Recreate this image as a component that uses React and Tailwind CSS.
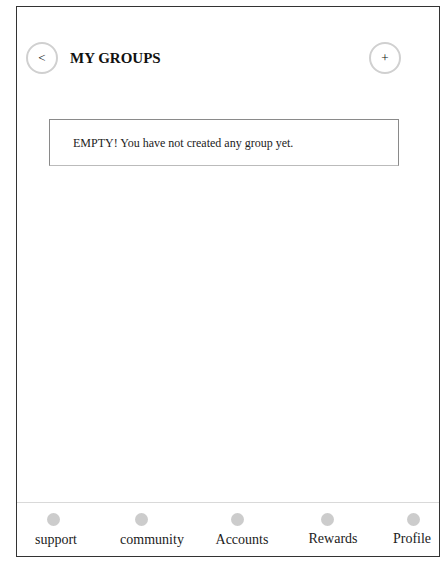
import React from "react";

const navItems = [
  { label: "support", w: "w-[78px]", dot: "ml-[-6px]", text: "mt-[6px]" },
  { label: "community", w: "w-[114px]", dot: "ml-[-22px]", text: "mt-[6px]" },
  { label: "Accounts", w: "w-[66px]", dot: "ml-[-10px]", text: "mt-[6px]" },
  { label: "Rewards", w: "w-[116px]", dot: "ml-[-12px]", text: "mt-[5px]" },
  { label: "Profile", w: "w-[42px]", dot: "ml-[2px]", text: "mt-[5px]" },
];

function CircleButton({ children }) {
  return (
    <div className="w-8 h-8 rounded-full border-2 border-[#d0d0d0] flex items-center justify-center text-[13px] text-[#111] shrink-0">
      {children}
    </div>
  );
}

export default function App() {
  return (
    <div className="w-[446px] h-[566px] bg-white pt-[6px] pl-4" style={{ fontFamily: '"Liberation Serif", "Times New Roman", serif' }}>
      <div className="w-[424px] h-[551px] border border-[#333] flex flex-col">
        {/* Header */}
        <div className="flex items-center pl-[9px] pr-[38px] pt-[35px]">
          <CircleButton>&lt;</CircleButton>
          <h1 className="ml-3 text-[15px] font-bold text-[#111] flex-1">MY GROUPS</h1>
          <CircleButton>+</CircleButton>
        </div>

        {/* Empty state */}
        <div className="mt-[45px] ml-8 w-[350px] h-[47px] border border-[#8a8a8a] border-b-[#bbb] flex items-center pl-[23px]">
          <p className="text-[12px] text-[#222]">EMPTY! You have not created any group yet.</p>
        </div>

        <div className="flex-1" />

        {/* Bottom nav */}
        <div className="h-[54px] border-t border-[#d9d9d9] flex pt-[10px]">
          {navItems.map((item) => (
            <div key={item.label} className={`${item.w} flex flex-col items-center shrink-0`}>
              <div className={`w-[13px] h-[13px] rounded-full bg-[#cccccc] ${item.dot}`} />
              <span className={`text-[14px] text-[#222] leading-4 whitespace-nowrap ${item.text}`}>{item.label}</span>
            </div>
          ))}
        </div>
      </div>
    </div>
  );
}
